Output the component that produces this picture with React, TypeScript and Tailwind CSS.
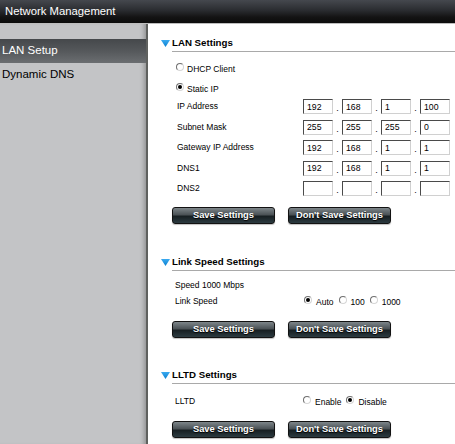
import React from 'react';

type Octets = [string, string, string, string];

const ipRows: { label: string; value: Octets }[] = [
  { label: 'IP Address', value: ['192', '168', '1', '100'] },
  { label: 'Subnet Mask', value: ['255', '255', '255', '0'] },
  { label: 'Gateway IP Address', value: ['192', '168', '1', '1'] },
  { label: 'DNS1', value: ['192', '168', '1', '1'] },
  { label: 'DNS2', value: ['', '', '', ''] },
];

const Radio = ({ checked = false }: { checked?: boolean }) => (
  <span className="mb-[3px] flex h-[8px] w-[8px] shrink-0 items-center justify-center rounded-full border border-t-[#6f6f6f] border-l-[#6f6f6f] border-r-[#d6d6d6] border-b-[#d6d6d6] bg-white">
    {checked && <span className="h-[4px] w-[4px] rounded-full bg-black" />}
  </span>
);

const Triangle = () => (
  <svg width="9" height="7" viewBox="0 0 9 7" className="mr-[2px] shrink-0">
    <defs>
      <linearGradient id="tri" x1="0" y1="0" x2="0" y2="1">
        <stop offset="0" stopColor="#3aaaf0" />
        <stop offset="1" stopColor="#0b80d0" />
      </linearGradient>
    </defs>
    <polygon points="0,0 9,0 4.5,7" fill="url(#tri)" />
  </svg>
);

const SectionTitle = ({ title }: { title: string }) => (
  <>
    <div className="-ml-[11px] flex h-[16px] items-center">
      <Triangle />
      <span className="text-[9.7px] font-bold text-black">{title}</span>
    </div>
    <div className="h-px bg-[#a9a9a9]" />
  </>
);

const Buttons = ({ className = '' }: { className?: string }) => (
  <div className={`flex gap-[13px] ${className}`}>
    {['Save Settings', "Don't Save Settings"].map((t) => (
      <button
        key={t}
        className="h-[17px] w-[103px] rounded-[3px] border border-[#121212] bg-[linear-gradient(180deg,#7d8589_0%,#4b5256_45%,#171f22_55%,#2b3a40_100%)] text-[9.3px] font-bold text-white shadow-[0_1px_1px_rgba(0,0,0,0.25)] [text-shadow:0_1px_1px_#000]"
      >
        {t}
      </button>
    ))}
  </div>
);

const OctetInput = ({ value }: { value: string }) => (
  <input
    readOnly
    value={value}
    className="h-[15px] w-[30px] border border-t-[#4a4a4a] border-l-[#4a4a4a] border-r-[#d0d0d0] border-b-[#d0d0d0] bg-white px-[3px] text-[8.7px] leading-none text-black outline-none"
  />
);

const Label = ({ children, className = '' }: { children: React.ReactNode; className?: string }) => (
  <span className={`text-[8.5px] text-black ${className}`}>{children}</span>
);

export default function App() {
  return (
    <div className="flex h-[444px] w-[455px] flex-col overflow-hidden bg-white font-['Liberation_Sans',Arial,sans-serif]">
      {/* top bar */}
      <div className="flex h-[23px] shrink-0 items-center bg-[linear-gradient(180deg,#45484e_0%,#2a2c30_45%,#131313_75%,#0c0c0c_100%)] pl-[5px] text-[11.3px] text-white">
        Network Management
      </div>
      <div className="h-px shrink-0 bg-[#bdbdbd]" />

      <div className="flex flex-1">
        {/* sidebar */}
        <aside className="w-[148px] shrink-0 border-r-2 border-[#5f615f] bg-[#c3c4c6] pt-[15px] shadow-[inset_-5px_0_4px_-3px_rgba(0,0,0,0.25)]">
          <div className="flex h-[24px] items-center bg-[linear-gradient(180deg,#45484b_0%,#55585b_50%,#6b6e71_100%)] pl-[2px] text-[11.5px] text-white">
            LAN Setup
          </div>
          <div className="flex h-[24px] items-center pl-[2px] text-[11.5px] text-black">Dynamic DNS</div>
        </aside>

        {/* content */}
        <main className="flex-1 pl-[24px] pt-[11px]">
          <section className="flex flex-col">
            <SectionTitle title="LAN Settings" />
            <div className="mt-[7px] flex flex-col pl-[4px]">
              <div className="flex h-[19px] items-center gap-[3px]">
                <Radio />
                <Label className="mt-[2px]">DHCP Client</Label>
              </div>
              <div className="flex h-[20px] items-center gap-[3px]">
                <Radio checked />
                <Label className="mt-[2px]">Static IP</Label>
              </div>
              <div className="mt-px flex flex-col gap-[5.5px]">
                {ipRows.map((row) => (
                  <div key={row.label} className="flex h-[15px] items-center">
                    <Label className="w-[127px] pl-px">{row.label}</Label>
                    <div className="flex items-center">
                      {row.value.map((v, i) => (
                        <React.Fragment key={i}>
                          {i > 0 && <span className="flex w-[9px] justify-center self-end text-[9px] leading-[12px]">.</span>}
                          <OctetInput value={v} />
                        </React.Fragment>
                      ))}
                    </div>
                  </div>
                ))}
              </div>
            </div>
            <Buttons className="mt-[11px]" />
          </section>

          <section className="mt-[30px] flex flex-col">
            <SectionTitle title="Link Speed Settings" />
            <div className="mt-[6px] flex flex-col pl-[3px]">
              <div className="flex h-[16px] items-center">
                <Label>Speed 1000 Mbps</Label>
              </div>
              <div className="flex h-[16px] items-center">
                <Label className="w-[129px]">Link Speed</Label>
                <div className="flex items-center">
                  <Radio checked />
                  <Label className="ml-[4px] mr-[5px] mt-[2px]">Auto</Label>
                  <Radio />
                  <Label className="ml-[4px] mr-[5px] mt-[2px]">100</Label>
                  <Radio />
                  <Label className="ml-[4px] mt-[2px]">1000</Label>
                </div>
              </div>
            </div>
            <Buttons className="mt-[12px]" />
          </section>

          <section className="mt-[29px] flex flex-col">
            <SectionTitle title="LLTD Settings" />
            <div className="mt-[9px] flex h-[16px] items-center pl-[3px]">
              <Label className="w-[128px]">LLTD</Label>
              <div className="flex items-center">
                <Radio />
                <Label className="ml-[4px] mr-[5px] mt-[2px]">Enable</Label>
                <Radio checked />
                <Label className="ml-[4px] mt-[2px]">Disable</Label>
              </div>
            </div>
            <Buttons className="mt-[12px]" />
          </section>
        </main>
      </div>
    </div>
  );
}
